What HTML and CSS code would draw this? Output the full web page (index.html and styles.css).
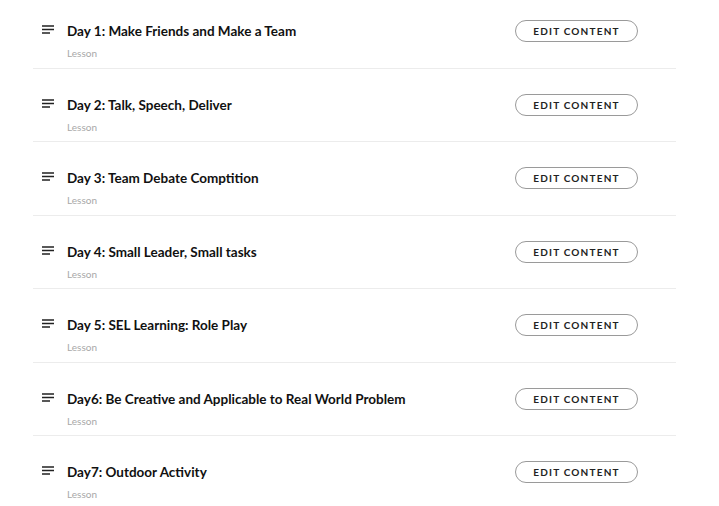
FILE: index.html
```html
<!DOCTYPE html>
<html lang="en">
<head>
    <meta charset="UTF-8">
    <meta name="viewport" content="width=device-width, initial-scale=1.0">
    <title>Lessons</title>
    <link rel="stylesheet" href="styles.css">
</head>
<body>
    <!-- Lesson list -->
    <ul class="lessons">
        <li class="lesson">
            <svg class="lesson-icon" width="14" height="14" viewBox="0 0 14 14"><path d="M1 2h12M1 5.5h12M1 9h8" /></svg>
            <div class="lesson-info">
                <h3>Day 1: Make Friends and Make a Team</h3>
                <p>Lesson</p>
            </div>
            <button class="edit-content">EDIT CONTENT</button>
        </li>
        <li class="lesson">
            <svg class="lesson-icon" width="14" height="14" viewBox="0 0 14 14"><path d="M1 2h12M1 5.5h12M1 9h8" /></svg>
            <div class="lesson-info">
                <h3>Day 2: Talk, Speech, Deliver</h3>
                <p>Lesson</p>
            </div>
            <button class="edit-content">EDIT CONTENT</button>
        </li>
        <li class="lesson">
            <svg class="lesson-icon" width="14" height="14" viewBox="0 0 14 14"><path d="M1 2h12M1 5.5h12M1 9h8" /></svg>
            <div class="lesson-info">
                <h3>Day 3: Team Debate Comptition</h3>
                <p>Lesson</p>
            </div>
            <button class="edit-content">EDIT CONTENT</button>
        </li>
        <li class="lesson">
            <svg class="lesson-icon" width="14" height="14" viewBox="0 0 14 14"><path d="M1 2h12M1 5.5h12M1 9h8" /></svg>
            <div class="lesson-info">
                <h3>Day 4: Small Leader, Small tasks</h3>
                <p>Lesson</p>
            </div>
            <button class="edit-content">EDIT CONTENT</button>
        </li>
        <li class="lesson">
            <svg class="lesson-icon" width="14" height="14" viewBox="0 0 14 14"><path d="M1 2h12M1 5.5h12M1 9h8" /></svg>
            <div class="lesson-info">
                <h3>Day 5: SEL Learning: Role Play</h3>
                <p>Lesson</p>
            </div>
            <button class="edit-content">EDIT CONTENT</button>
        </li>
        <li class="lesson">
            <svg class="lesson-icon" width="14" height="14" viewBox="0 0 14 14"><path d="M1 2h12M1 5.5h12M1 9h8" /></svg>
            <div class="lesson-info">
                <h3>Day6: Be Creative and Applicable to Real World Problem</h3>
                <p>Lesson</p>
            </div>
            <button class="edit-content">EDIT CONTENT</button>
        </li>
        <li class="lesson">
            <svg class="lesson-icon" width="14" height="14" viewBox="0 0 14 14"><path d="M1 2h12M1 5.5h12M1 9h8" /></svg>
            <div class="lesson-info">
                <h3>Day7: Outdoor Activity</h3>
                <p>Lesson</p>
            </div>
            <button class="edit-content">EDIT CONTENT</button>
        </li>
    </ul>
</body>
</html>
```

FILE: styles.css
```css
body {
    font-family: Lato, "Open Sans", sans-serif;
    margin: 0;
    padding: 0;
    background: #fff;
    color: #111;
}
.lessons {
    list-style: none;
    width: 643px;
    margin: -5px 0 0 33px;
    padding: 0;
}
.lesson {
    display: flex;
    align-items: flex-start;
    box-sizing: border-box;
    height: 73.5px;
    padding: 26px 38px 0 8px;
    border-bottom: 1px solid #ececec;
}
.lesson-icon {
    flex: none;
    margin-top: 3px;
    margin-right: 12px;
    fill: none;
    stroke: #222;
    stroke-width: 1.6;
}
.lesson-info {
    flex: 1;
}
.lesson-info h3 {
    margin: 0;
    font-size: 13.5px;
    line-height: 20px;
    font-weight: 700;
    color: #111;
}
.lesson-info p {
    margin: 5px 0 0;
    font-size: 10px;
    line-height: 14px;
    color: #a8a8a8;
}
.edit-content {
    flex: none;
    width: 123px;
    height: 22px;
    margin-top: -1px;
    padding: 0;
    border: 1px solid #9a9a9a;
    border-radius: 11px;
    background: #fff;
    font-family: Lato, sans-serif;
    font-size: 10px;
    font-weight: 700;
    letter-spacing: 1.2px;
    color: #222;
    cursor: pointer;
}
```
